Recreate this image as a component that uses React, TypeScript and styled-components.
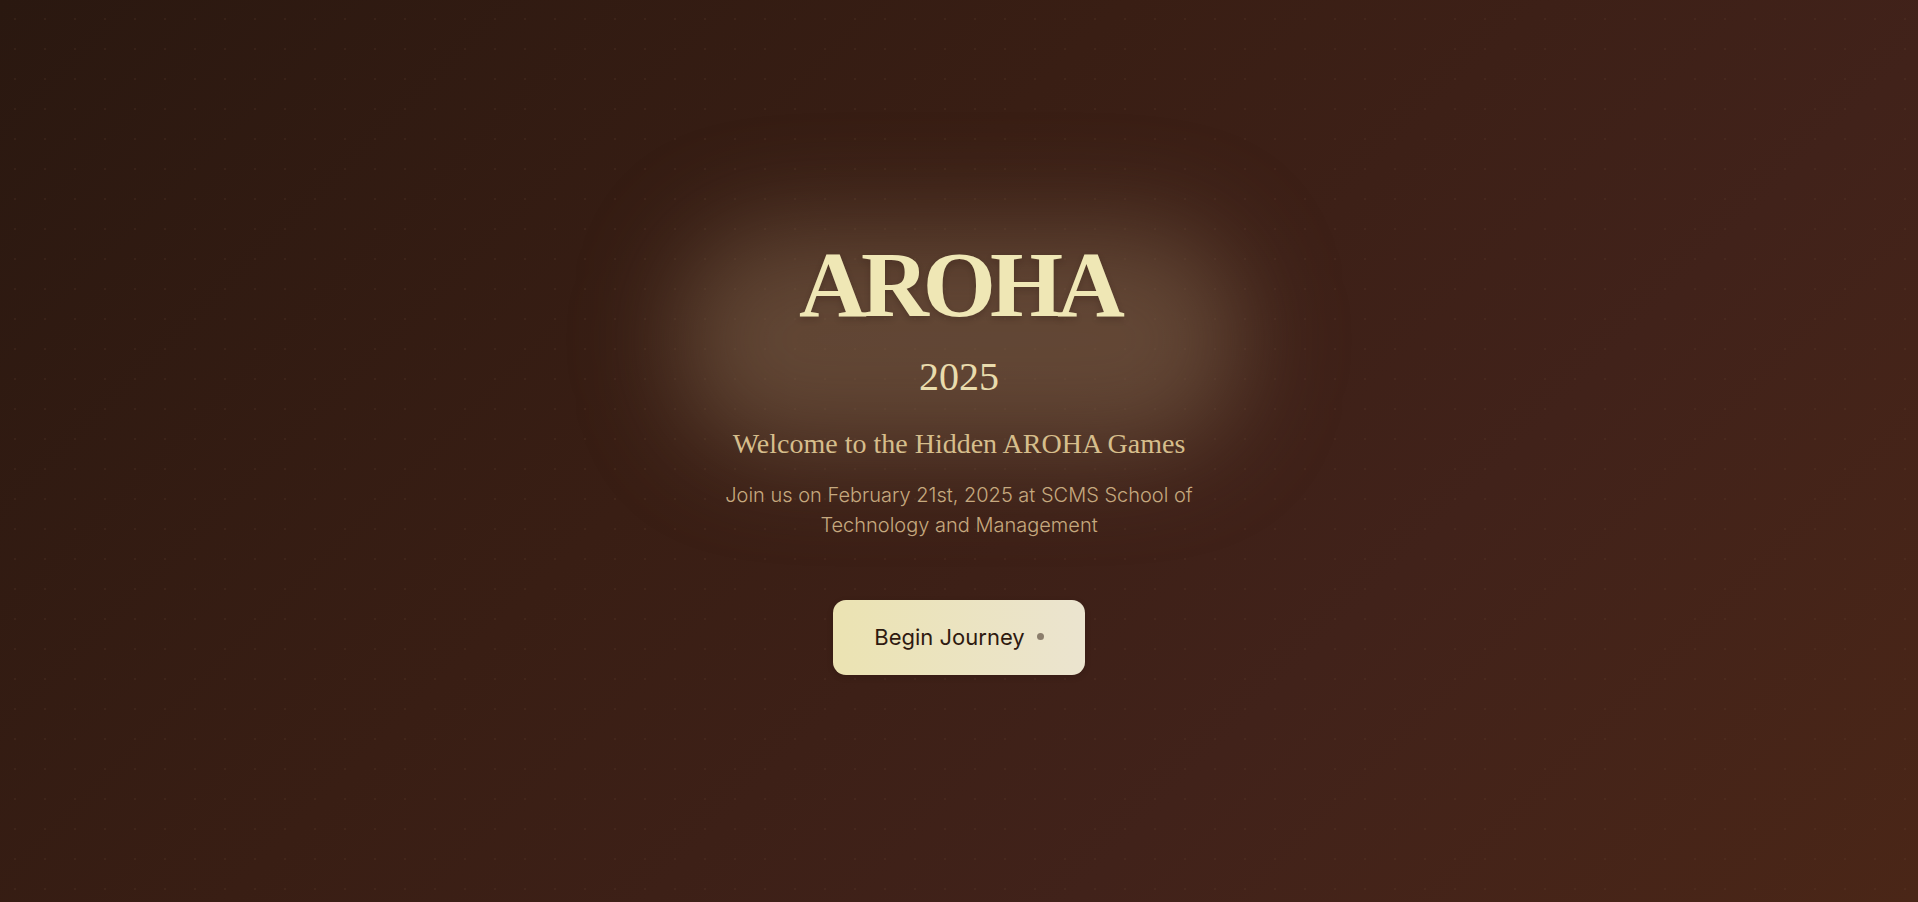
import styled, { createGlobalStyle } from 'styled-components'

const GlobalStyle = createGlobalStyle`
  html, body {
    margin: 0;
    padding: 0;
    height: 100%;
  }

  body {
    background: #2c1a12;
    font-family: Inter, "Liberation Sans", sans-serif;
  }
`

const StyledPage = styled.main`
  position: relative;
  min-height: 100vh;
  overflow: hidden;
  display: flex;
  align-items: center;
  justify-content: center;
  background:
    radial-gradient(circle, rgba(110, 75, 55, 0.18) 1px, transparent 1.5px) 0 4px / 30px 30px,
    linear-gradient(135deg, #2a1810 0%, #391e14 40%, #41221a 70%, #4a2617 100%);
`

const StyledHero = styled.section`
  position: relative;
  display: flex;
  flex-direction: column;
  align-items: center;
  text-align: center;
  padding-top: 10px;

  &::before {
    content: '';
    position: absolute;
    left: 50%;
    top: 0;
    width: 560px;
    height: 225px;
    transform: translateX(-50%);
    border-radius: 100px;
    background: rgba(135, 108, 82, 0.52);
    filter: blur(50px);
    z-index: 0;
  }

  > * {
    position: relative;
    z-index: 1;
  }
`

const StyledTitle = styled.h1`
  margin: 0;
  font-family: "Liberation Serif", "DejaVu Serif", serif;
  font-weight: 700;
  font-size: 94px;
  line-height: 1;
  letter-spacing: -6px;
  color: #efe7b5;
  text-shadow: 0 3px 6px rgba(30, 15, 8, 0.2);
`

const StyledYear = styled.div`
  margin-top: 26px;
  font-family: "Liberation Serif", "DejaVu Serif", serif;
  font-size: 40px;
  line-height: 1;
  color: #e9dcad;
`

const StyledWelcome = styled.h2`
  margin: 30px 0 0;
  font-family: "Liberation Serif", "DejaVu Serif", serif;
  font-weight: 400;
  font-size: 28px;
  line-height: 1.2;
  color: #d6be8c;
`

const StyledInfo = styled.p`
  margin: 19px 0 0;
  max-width: 576px;
  font-size: 20px;
  line-height: 30px;
  font-weight: 300;
  color: #c6a97f;
`

const StyledButton = styled.button`
  margin-top: 60px;
  width: 252px;
  height: 75px;
  display: flex;
  align-items: center;
  justify-content: center;
  gap: 12px;
  border: none;
  border-radius: 13px;
  background: linear-gradient(90deg, #ebe3b2 0%, #ebe4cf 100%);
  font-family: Inter, "Liberation Sans", sans-serif;
  font-size: 22px;
  font-weight: 400;
  color: #2e1a10;
  cursor: pointer;
  box-shadow: 0 2px 6px rgba(20, 10, 5, 0.15);
`

const StyledDot = styled.span`
  width: 7px;
  height: 7px;
  border-radius: 50%;
  background: #8b7e6c;
  margin-top: -2px;
`

export default function App() {
  return (
    <>
      <GlobalStyle />
      <StyledPage>
        <StyledHero>
          <StyledTitle>AROHA</StyledTitle>
          <StyledYear>2025</StyledYear>
          <StyledWelcome>Welcome to the Hidden AROHA Games</StyledWelcome>
          <StyledInfo>
            Join us on February 21st, 2025 at SCMS School of Technology and Management
          </StyledInfo>
          <StyledButton>
            Begin Journey
            <StyledDot />
          </StyledButton>
        </StyledHero>
      </StyledPage>
    </>
  )
}
